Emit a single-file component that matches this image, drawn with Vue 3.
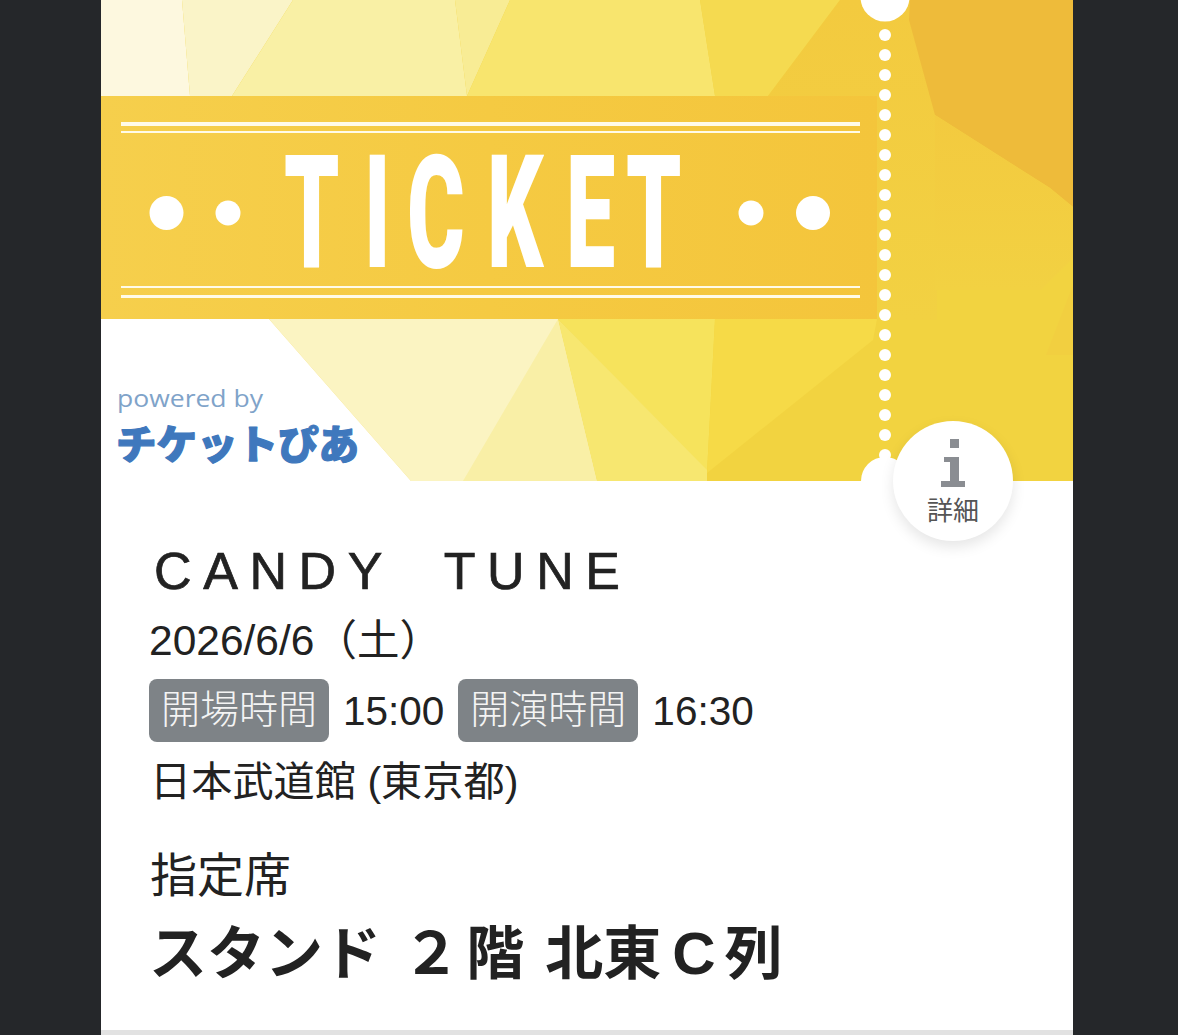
<template>
  <div class="page">
    <main class="ticket">
      <section class="hero">
        <svg class="art" viewBox="0 0 972 481" width="972" height="481">
          <defs>
            <linearGradient id="band" x1="0" y1="0" x2="1" y2="0">
              <stop offset="0" stop-color="#f6cf4c" />
              <stop offset="0.5" stop-color="#f5ca42" />
              <stop offset="1" stop-color="#f4c53b" />
            </linearGradient>
            <linearGradient id="side" x1="0" y1="0" x2="0" y2="1">
              <stop offset="0" stop-color="#f3ca3f" />
              <stop offset="1" stop-color="#f2d142" />
            </linearGradient>
          </defs>
          <!-- facets -->
          <rect width="972" height="481" fill="#f2d340" />
          <polygon v-for="f in facets" :key="f.points" :points="f.points" :fill="f.fill" />

          <!-- band -->
          <rect y="96" width="776" height="223" fill="url(#band)" />
          <rect x="20" y="122" width="739" height="4" fill="#fffbe8" />
          <rect x="20" y="131" width="739" height="2" fill="#fffbe8" />
          <rect x="20" y="286" width="739" height="2" fill="#fffbe8" />
          <rect x="20" y="295" width="739" height="3" fill="#fffbe8" />
          <circle cx="65.5" cy="213" r="17" fill="#fff" />
          <circle cx="127" cy="213" r="12.5" fill="#fff" />
          <circle cx="650" cy="213" r="12.5" fill="#fff" />
          <circle cx="712" cy="213" r="17" fill="#fff" />
          <text class="ticket-word" transform="scale(0.56 1)" :x="ticketX" y="267">TICKET</text>

          <!-- perforation -->
          <circle cx="784" cy="-3" r="24.5" fill="#fff" />
          <circle v-for="y in perforations" :key="y" cx="784" :cy="y" r="6" fill="#fff" />
          <circle cx="784" cy="481" r="24" fill="#fff" />

          <!-- logo -->
          <text class="powered" x="16" y="407" textLength="146" lengthAdjust="spacingAndGlyphs">powered by</text>
          <text class="pia" x="15" y="459" textLength="243" lengthAdjust="spacingAndGlyphs">チケットぴあ</text>
        </svg>

        <button class="detail" type="button">
          <svg class="detail-icon" viewBox="0 0 24 48" width="24" height="48">
            <path d="M9 0h9v9H9zM3 18h15v24h6v6H0v-6h9V23H3z" fill="#8a8d92" />
          </svg>
          <span class="detail-label">詳細</span>
        </button>
      </section>

      <section class="body">
        <h1 class="artist">CANDY<span class="artist-gap">　</span>TUNE</h1>
        <p class="date">2026/6/6（土）</p>
        <div class="times">
          <span class="tag">開場時間</span>
          <span class="time">15:00</span>
          <span class="tag">開演時間</span>
          <span class="time">16:30</span>
        </div>
        <p class="venue">日本武道館 (東京都)</p>
        <p class="seat-type">指定席</p>
        <p class="seat">スタンド <span class="seat-floor">２</span>階 北東<span class="seat-row">C</span>列</p>
      </section>
      <div class="rule"></div>
    </main>
  </div>
</template>

<script setup>
// ミシン目のドット
const perforations = Array.from({ length: 22 }, (_, i) => 35 + i * 20)

// 文字ごとの位置（scale 前の座標）
const ticketX = [183, 263, 306, 386, 465, 525].map((x) => (x / 0.56).toFixed(1)).join(' ')

// 背景のポリゴン
const facets = [
  { points: '0,0 81,0 89,96 0,96', fill: '#fdf8df' },
  { points: '81,0 192,0 131,96 89,96', fill: '#faf4c8' },
  { points: '192,0 354,0 366,96 131,96', fill: '#f9f0a5' },
  { points: '354,0 409,0 366,96', fill: '#f8ec95' },
  { points: '409,0 599,0 614,96 366,96', fill: '#f8e56e' },
  { points: '599,0 739,0 667,96 614,96', fill: '#f5da50' },
  { points: '739,0 810,0 836,115 836,320 776,320 776,96 667,96', fill: 'url(#side)' },
  { points: '809,0 972,0 972,207 949,188 834,115 808,20', fill: '#eebb3a' },
  { points: '834,115 949,188 972,207 972,258 940,290 834,290', fill: 'url(#side)' },
  { points: '972,285 972,355 945,355', fill: '#f2cf40' },
  { points: '168,319 457,319 496,481 310,481', fill: '#fbf4c2' },
  { points: '457,319 496,481 362,481', fill: '#f9efa6' },
  { points: '457,319 614,319 606,473', fill: '#f6e35c' },
  { points: '457,319 606,470 606,481 496,481', fill: '#f7e770' },
  { points: '614,319 776,319 772,340 606,473', fill: '#f6da47' },
  { points: '0,319 168,319 310,481 0,481', fill: '#ffffff' },
]
</script>

<style>
html, body {
  margin: 0;
  background: #25272a;
}
</style>

<style scoped>
.page {
  height: 1035px;
  overflow: hidden;
  background: #25272a;
  padding-left: 101px;
  font-family: "Liberation Sans", "Noto Sans CJK JP", sans-serif;
  color: #222;
}

.ticket {
  width: 972px;
  height: 1035px;
  background: #fff;
  display: flex;
  flex-direction: column;
}

.hero {
  position: relative;
  height: 481px;
  flex: none;
}

.art {
  display: block;
}

.ticket-word {
  font-family: "Roboto", "Liberation Sans", sans-serif;
  font-weight: 900;
  font-size: 157px;
  fill: #fff;
}

.powered {
  font-family: "Open Sans", "Liberation Sans", sans-serif;
  font-size: 24px;
  fill: #7fa3c9;
}

.pia {
  font-family: "Noto Sans CJK JP", sans-serif;
  font-weight: 900;
  font-size: 40px;
  fill: #3f78bd;
  stroke: #3f78bd;
  stroke-width: 1.2px;
  stroke-linejoin: round;
}

.detail {
  position: absolute;
  left: 792px;
  top: 421px;
  width: 120px;
  height: 120px;
  padding: 18px 0 0;
  border: 0;
  border-radius: 50%;
  background: #fff;
  box-shadow: 0 6px 14px rgba(0, 0, 0, 0.1);
  display: flex;
  flex-direction: column;
  align-items: center;
  font-family: inherit;
}

.detail-icon {
  display: block;
}

.detail-label {
  margin-top: 6px;
  font-size: 26px;
  line-height: 36px;
  color: #555;
}

.body {
  padding: 60px 0 0 48px;
  flex: 1;
}

.artist {
  height: 60px;
  margin: 0 0 0 5px;
  font-size: 52px;
  line-height: 60px;
  font-weight: 400;
  letter-spacing: 11.6px;
  -webkit-text-stroke: 0.7px #222;
  white-space: nowrap;
}

.artist-gap {
  font-size: 38px;
}

.date {
  margin: 10px 0 0;
  font-size: 42.5px;
  line-height: 60px;
}

.times {
  margin-top: 8px;
  display: flex;
  align-items: center;
  height: 63px;
}

.tag {
  width: 180px;
  height: 63px;
  border-radius: 8px;
  background: #7e8387;
  color: #f4f4f4;
  font-size: 39px;
  line-height: 61px;
  font-weight: 300;
  text-align: center;
}

.time {
  margin: 0 14px;
  padding-top: 2px;
  font-size: 40.5px;
  line-height: 61px;
}

.venue {
  margin: 12px 0 0 1px;
  font-size: 41.2px;
  line-height: 56px;
}

.seat-type {
  margin: 36px 0 0 1px;
  font-size: 47px;
  line-height: 60px;
}

.seat {
  margin: 6px 0 0;
  font-size: 58px;
  line-height: 84px;
  font-weight: 700;
  white-space: nowrap;
  word-spacing: 5px;
}

.seat-floor {
  margin-right: 6px;
}

.seat-row {
  margin: 0 9px 0 11px;
  font-size: 60px;
}

.rule {
  height: 5px;
  flex: none;
  background: #e2e2e2;
}
</style>
